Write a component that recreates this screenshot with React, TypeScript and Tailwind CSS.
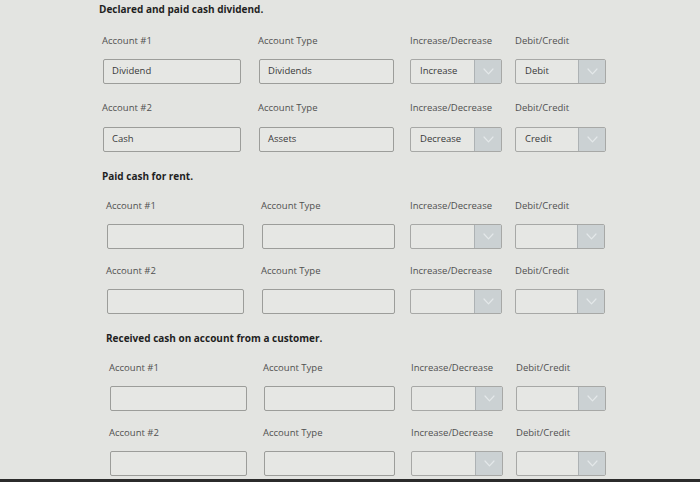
import React from "react";

type Cols = [string, string, string, string];

const S1: Cols = ["w-[138px]", "w-[135px] ml-[18px]", "w-[92px] ml-[16px]", "w-[91px] ml-[13px]"];
const S2: Cols = ["w-[137px]", "w-[133px] ml-[18px]", "w-[92px] ml-[15px]", "w-[90px] ml-[13px]"];
const S3: Cols = ["w-[137px]", "w-[131px] ml-[17px]", "w-[92px] ml-[16px]", "w-[90px] ml-[13px]"];

function Chevron() {
  return (
    <svg width="11" height="7" viewBox="0 0 11 7" fill="none">
      <path d="M1 1 L5.5 5.8 L10 1" stroke="#e4e8ea" strokeWidth="1.2" strokeLinecap="round" strokeLinejoin="round" />
    </svg>
  );
}

function TextBox({ value, cls }: { value?: string; cls: string }) {
  return (
    <div className={`${cls} h-[25px] border border-[#9c9d9a] rounded-[2px] bg-[#e6e7e4] flex items-center pl-[8px] text-[9.5px] text-[#3a3a3a]`}>
      {value}
    </div>
  );
}

function Select({ value, cls }: { value?: string; cls: string }) {
  return (
    <div className={`${cls} h-[25px] border border-[#a7a8a6] rounded-[2px] bg-[#e6e7e4] flex`}>
      <div className="flex-1 flex items-center pl-[9px] text-[9.5px] text-[#3a3a3a]">{value}</div>
      <div className="w-[27px] bg-[#cbd1d3] border-l border-[#adb2b4] flex items-center justify-center">
        <Chevron />
      </div>
    </div>
  );
}

function Labels({ n, mb, cols }: { n: number; mb: string; cols: Cols }) {
  const t = [`Account #${n}`, "Account Type", "Increase/Decrease", "Debit/Credit"];
  return (
    <div className={`flex h-[14px] items-center ${mb}`}>
      {t.map((s, i) => (
        <div
          key={i}
          className={`${cols[i]} text-[9.5px] text-[#505050] whitespace-nowrap ${i >= 2 ? "pl-[1px]" : "-ml-[1px]"}`}
        >
          {s}
        </div>
      ))}
    </div>
  );
}

function Inputs({ v, cols }: { v?: [string, string, string, string]; cols: Cols }) {
  return (
    <div className="flex">
      <TextBox cls={cols[0]} value={v?.[0]} />
      <TextBox cls={cols[1]} value={v?.[1]} />
      <Select cls={cols[2]} value={v?.[2]} />
      <Select cls={cols[3]} value={v?.[3]} />
    </div>
  );
}

export default function App() {
  return (
    <div
      className="w-[700px] h-[482px] bg-[#e3e4e1] flex flex-col overflow-hidden"
      style={{ fontFamily: '"Open Sans", "Noto Sans", sans-serif' }}
    >
      <div className="flex-1 flex flex-col">
        {/* Section 1 */}
        <div className="flex flex-col pl-[103px] pt-[2px]">
          <div className="h-[14px] flex items-center -ml-[4px] mb-[18px] text-[10px] font-bold text-[#1f1f1f]">
            Declared and paid cash dividend.
          </div>
          <Labels n={1} mb="mb-[11px]" cols={S1} />
          <Inputs cols={S1} v={["Dividend", "Dividends", "Increase", "Debit"]} />
          <div className="h-[17px]" />
          <Labels n={2} mb="mb-[12px]" cols={S1} />
          <Inputs cols={S1} v={["Cash", "Assets", "Decrease", "Credit"]} />
        </div>
        {/* Section 2 */}
        <div className="flex flex-col pl-[107px] pt-[17px]">
          <div className="h-[14px] flex items-center -ml-[5px] mb-[16px] text-[10px] font-bold text-[#1f1f1f]">
            Paid cash for rent.
          </div>
          <Labels n={1} mb="mb-[11px]" cols={S2} />
          <Inputs cols={S2} />
          <div className="h-[15px]" />
          <Labels n={2} mb="mb-[11px]" cols={S2} />
          <Inputs cols={S2} />
        </div>
        {/* Section 3 */}
        <div className="flex flex-col pl-[110px] pt-[17px]">
          <div className="h-[14px] flex items-center -ml-[4px] mb-[16px] text-[10px] font-bold text-[#1f1f1f]">
            Received cash on account from a customer.
          </div>
          <Labels n={1} mb="mb-[11px]" cols={S3} />
          <Inputs cols={S3} />
          <div className="h-[15px]" />
          <Labels n={2} mb="mb-[11px]" cols={S3} />
          <Inputs cols={S3} />
        </div>
      </div>
      <div className="h-[3px] bg-[#2b2b2b]" />
    </div>
  );
}
